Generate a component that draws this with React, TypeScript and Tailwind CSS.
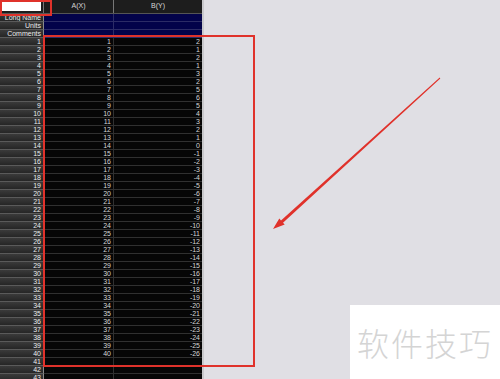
const yValues = [2, 1, 2, 1, 3, 2, 5, 6, 5, 4, 3, 2, 1];

const rows = Array.from({ length: 43 }, (_, i) => {
  const n = i + 1;
  if (n > 40) return { n, x: "", y: "" };
  const y = n <= 13 ? yValues[i] : 14 - n;
  return { n, x: String(n), y: String(y) };
});

const metaRows = ["Long Name", "Units", "Comments"];

function RowLabel({ children }: { children: React.ReactNode }) {
  return (
    <div className="h-[8px] leading-[8px] pr-[2px] text-right text-[#ececec] bg-gradient-to-b from-[#3a3a3a] to-[#262626] border-b border-[#5a5a5a] border-r border-r-[#8a8a8a] overflow-hidden whitespace-nowrap">
      {children}
    </div>
  );
}

export default function App() {
  return (
    <div className="relative w-[500px] h-[379px] overflow-hidden bg-[#e0dfe4] font-['Liberation_Sans',Arial,sans-serif] text-[7px]">
      <div className="flex h-full">
        {/* worksheet */}
        <div className="w-[204px] h-full bg-[#060606] border-r-2 border-[#c9c9cc] flex flex-col">
          {/* column header */}
          <div className="flex h-[14px] shrink-0 bg-[#1d1d1d] border-b border-[#555]">
            <div className="w-[44px] p-[2px] border-r border-[#777]">
              <div className="h-full bg-white" />
            </div>
            <div className="w-[70px] flex items-center justify-center text-[#d8d8d8] border-r border-[#777]">
              A(X)
            </div>
            <div className="flex-1 flex items-center justify-center text-[#d8d8d8]">B(Y)</div>
          </div>

          <div className="grid grid-cols-[44px_70px_1fr]">
            {metaRows.map((label) => (
              <div key={label} className="contents">
                <RowLabel>{label}</RowLabel>
                <div className="h-[8px] bg-[#03034a] border-b border-r border-[#2c2c66]" />
                <div className="h-[8px] bg-[#03034a] border-b border-[#2c2c66]" />
              </div>
            ))}
            {rows.map((r) => (
              <div key={r.n} className="contents">
                <RowLabel>{r.n}</RowLabel>
                <div className="h-[8px] leading-[8px] pr-[2px] text-right text-[#d6d6d6] bg-[#060606] border-b border-r border-[#303030]">
                  {r.x}
                </div>
                <div className="h-[8px] leading-[8px] pr-[2px] text-right text-[#d6d6d6] bg-[#060606] border-b border-[#303030]">
                  {r.y}
                </div>
              </div>
            ))}
          </div>
        </div>

        {/* empty area with watermark */}
        <div className="flex-1 flex flex-col justify-end items-end">
          <div className="w-[150px] h-[74px] bg-white flex items-center justify-center text-[32px] tracking-[2px] text-[#d4d4d4] font-['Noto_Sans_CJK_SC',sans-serif] font-light">
            软件技巧
          </div>
        </div>
      </div>

      {/* annotations */}
      <div className="absolute left-0 top-0 w-[52px] h-[16px] border-2 border-[#e0322b]" />
      <div className="absolute left-[43px] top-[35px] w-[212px] h-[332px] border-2 border-[#e0322b]" />
      <svg className="absolute inset-0" width="500" height="379" viewBox="0 0 500 379">
        <polygon
          points="439.7,77.6 281,220.5 279.3,218.6 273,229 284.7,224.6 283,222.7 440.3,78.4"
          fill="#e0322b"
        />
      </svg>
    </div>
  );
}
